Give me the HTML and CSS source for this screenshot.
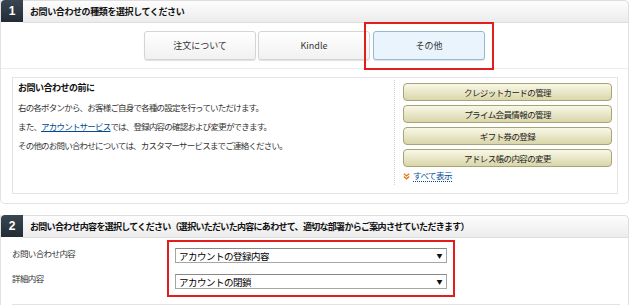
FILE: index.html
```html
<!DOCTYPE html>
<html lang="ja">
<head>
    <meta charset="UTF-8">
    <title>お問い合わせ</title>
    <link rel="stylesheet" href="styles.css">
</head>
<body>
    <div class="panel">
        <div class="panel-head">
            <span class="step">1</span>
            <h2 class="panel-title">お問い合わせの種類を選択してください</h2>
        </div>
        <div class="type-row">
            <button class="type-btn">注文について</button>
            <button class="type-btn">Kindle</button>
            <button class="type-btn selected">その他</button>
        </div>
        <div class="info-box">
            <div class="info-text">
                <h3>お問い合わせの前に</h3>
                <p>右の各ボタンから、お客様ご自身で各種の設定を行っていただけます。</p>
                <p>また、<a href="#">アカウントサービス</a>では、登録内容の確認および変更ができます。</p>
                <p>その他のお問い合わせについては、カスタマーサービスまでご連絡ください。</p>
            </div>
            <div class="shortcuts">
                <button class="sc-btn">クレジットカードの管理</button>
                <button class="sc-btn">プライム会員情報の管理</button>
                <button class="sc-btn">ギフト券の登録</button>
                <button class="sc-btn">アドレス帳の内容の変更</button>
                <a class="show-all" href="#">
                    <svg width="7" height="7" viewBox="0 0 7 7"><polyline points="0.8,0.8 3.5,3 6.2,0.8" fill="none" stroke="#e47911" stroke-width="1.3"/><polyline points="0.8,3.6 3.5,5.8 6.2,3.6" fill="none" stroke="#e47911" stroke-width="1.3"/></svg>
                    <span>すべて表示</span>
                </a>
            </div>
        </div>
    </div>

    <div class="panel panel-2">
        <div class="panel-head">
            <span class="step">2</span>
            <h2 class="panel-title">お問い合わせ内容を選択してください（選択いただいた内容にあわせて、適切な部署からご案内させていただきます）</h2>
        </div>
        <div class="detail">
            <div class="labels">
                <div class="label">お問い合わせ内容</div>
                <div class="label">詳細内容</div>
            </div>
            <div class="fields">
                <div class="select"><span>アカウントの登録内容</span><span class="arrow">▼</span></div>
                <div class="select"><span>アカウントの閉鎖</span><span class="arrow">▼</span></div>
            </div>
        </div>
        <div class="sep"></div>
    </div>
</body>
</html>
```

FILE: styles.css
```css
body {
    margin: 0;
    background: #fff;
    font-family: "Noto Sans CJK JP", "Noto Sans", sans-serif;
    color: #111;
    overflow: hidden;
}

.panel {
    width: 627px;
    border: 1px solid #e2e2e2;
    border-top: none;
    border-radius: 0 5px 5px 5px;
    padding-bottom: 9px;
}

.panel-2 {
    margin-top: 11px;
    padding-bottom: 40px;
}

.panel-head {
    display: flex;
    height: 22px;
}

.step {
    width: 22px;
    height: 22px;
    background: linear-gradient(#3a4651, #222c36);
    border-radius: 4px 0 0 0;
    color: #fff;
    font-family: "Liberation Sans", Arial, sans-serif;
    font-weight: bold;
    font-size: 12px;
    line-height: 22px;
    text-align: center;
}

.panel-title {
    flex: 1;
    margin: 0 -1px 0 0;
    padding-left: 7px;
    height: 21px;
    background: linear-gradient(#fdfdfd, #ececec);
    border: 1px solid #dedede;
    border-left: none;
    border-radius: 0 5px 0 0;
    font-size: 9px;
    letter-spacing: -0.4px;
    font-weight: bold;
    line-height: 21px;
    color: #111;
}

.panel-2 .panel-title {
    letter-spacing: -0.7px;
}

/* type buttons */
.type-row {
    display: flex;
    justify-content: center;
    gap: 2px;
    padding: 9px 0 8px;
    border-bottom: 1px solid #ececec;
}

.type-btn {
    width: 112px;
    height: 29px;
    background: linear-gradient(#fff, #f1f1f1);
    border: 1px solid #d4d4d4;
    border-radius: 3px;
    box-shadow: 0 1px 1px rgba(0, 0, 0, 0.12);
    font-family: "Noto Sans CJK JP", "Noto Sans", sans-serif;
    font-size: 9px;
    color: #333;
    padding: 0;
}

.type-btn.selected {
    position: relative;
    background: #e9f4fd;
    border-color: #97b8d3;
    margin-left: 1px;
}

/* red highlight frame */
.type-btn.selected::after {
    content: "";
    position: absolute;
    top: -10px;
    left: -10px;
    right: -10px;
    bottom: -11px;
    border: 2px solid #e31c1c;
}

/* info box */
.info-box {
    display: flex;
    margin: 8px 10px 0 11px;
    height: 115px;
    border: 1px solid #e4e4e4;
}

.info-text {
    width: 376px;
    padding: 3px 0 0 5px;
    font-size: 8.5px;
    letter-spacing: -0.8px;
    color: #333;
}

.info-text h3 {
    margin: 0;
    font-size: 9px;
    letter-spacing: -0.5px;
    line-height: 14px;
    color: #111;
}

.info-text p {
    margin: 6px 0 0;
    line-height: 13px;
}

.info-text a {
    color: #004b91;
}

.shortcuts {
    flex: 1;
    display: flex;
    flex-direction: column;
    gap: 4px;
    margin: 2px 0 8px;
    padding: 3px 5px 0 8px;
    border-left: 1px dotted #cfcfcf;
}

.sc-btn {
    height: 18px;
    background: linear-gradient(#f9f8e6, #d9d6aa);
    border: 1px solid #a8a479;
    border-radius: 4px;
    font-family: "Noto Sans CJK JP", "Noto Sans", sans-serif;
    font-size: 8.5px;
    letter-spacing: -0.6px;
    color: #222;
    padding: 0;
}

.show-all {
    display: flex;
    align-items: center;
    gap: 3px;
    margin-top: -1px;
    font-size: 8.5px;
    letter-spacing: -0.5px;
    color: #004b91;
    text-decoration: none;
}

.show-all span {
    border-bottom: 1px dotted #004b91;
    line-height: 11px;
}

/* detail selects */
.detail {
    display: flex;
    padding: 11px 0 0 11px;
}

.labels {
    width: 163px;
    display: flex;
    flex-direction: column;
    gap: 11px;
}

.label {
    height: 14px;
    line-height: 11px;
    font-size: 8.5px;
    letter-spacing: -0.6px;
    color: #333;
}

.fields {
    width: 272px;
    display: flex;
    flex-direction: column;
    gap: 11px;
    outline: 2px solid #e31c1c;
    outline-offset: 6px;
}

.select {
    display: flex;
    justify-content: space-between;
    align-items: center;
    height: 13px;
    padding: 0 4px 0 3px;
    border: 1px solid #a6a6a6;
    border-top-color: #888;
    font-size: 9.5px;
    letter-spacing: -0.5px;
    color: #000;
}

.arrow {
    font-size: 6px;
    color: #111;
}

.sep {
    margin: 15px 8px 0 11px;
    border-top: 1px solid #e2e2e2;
}
```
